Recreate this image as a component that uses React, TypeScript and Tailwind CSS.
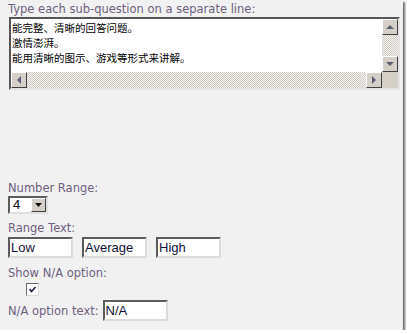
const label = "text-[11.5px] leading-[14px] text-[#6e5f7e]";
const inputBox =
  "h-[21px] w-[65px] bg-white border-2 border-t-[#5c5c5c] border-l-[#5c5c5c] border-b-[#dcdcdc] border-r-[#dcdcdc] px-[1px] text-[13px] leading-[17px] text-[#10103a] [font-family:'Liberation_Sans',Arial,sans-serif]";
const track =
  "bg-[repeating-conic-gradient(#cfcbc3_0_25%,#f5f5f3_0_50%)] bg-[length:2px_2px]";
const btn =
  "w-[16px] h-[16px] bg-[#d4d0c8] border border-t-white border-l-white border-b-[#404040] border-r-[#404040] flex items-center justify-center";

function Tri({ dir }: { dir: "up" | "down" | "left" | "right" }) {
  const pts = {
    up: "0,5 4,1 8,5",
    down: "0,1 4,5 8,1",
    left: "5,0 1,4 5,8",
    right: "1,0 5,4 1,8",
  }[dir];
  const flat = dir === "up" || dir === "down";
  return (
    <svg width={flat ? 8 : 6} height={flat ? 6 : 8} viewBox={flat ? "0 0 8 6" : "0 0 6 8"}>
      <polygon points={pts} fill="#5a6070" />
    </svg>
  );
}

export default function App() {
  return (
    <div className="w-[403px] h-[330px] bg-[#f1f1f1] shadow-[2px_2px_2px_rgba(0,0,0,0.6)] pl-2 pt-[2px] [font-family:'DejaVu_Sans',Verdana,sans-serif]">
      <div className={label}>Type each sub-question on a separate line:</div>

      {/* textarea */}
      <div className="ml-px mt-px w-[391px] h-[73px] border-2 border-t-[#555] border-l-[#555] border-b-[#e4e4e4] border-r-[#e4e4e4] flex flex-col">
        <div className="flex h-[53px]">
          <div className="flex-1 bg-white px-[1px] pt-[1px] text-[10.5px] leading-[15px] text-black [font-family:'Noto_Sans_CJK_SC',sans-serif]">
            <div>能完整、清晰的回答问题。</div>
            <div>激情澎湃。</div>
            <div>能用清晰的图示、游戏等形式来讲解。</div>
          </div>
          <div className={`w-[16px] flex flex-col ${track}`}>
            <div className={btn}>
              <Tri dir="up" />
            </div>
            <div className="flex-1" />
            <div className={btn}>
              <Tri dir="down" />
            </div>
          </div>
        </div>
        <div className="flex h-[16px]">
          <div className={`flex-1 flex justify-between ${track}`}>
            <div className={btn}>
              <Tri dir="left" />
            </div>
            <div className={btn}>
              <Tri dir="right" />
            </div>
          </div>
          <div className="w-[16px] bg-[#d4d0c8]" />
        </div>
      </div>

      <div className={`${label} mt-[91px]`}>Number Range:</div>
      <div className="mt-px w-[40px] h-[18px] bg-white border-2 border-t-[#5c5c5c] border-l-[#5c5c5c] border-b-[#e0e0e0] border-r-[#e0e0e0] flex items-center">
        <span className="flex-1 pl-[3px] text-[13px] leading-[14px] text-black [font-family:'Liberation_Sans',Arial,sans-serif]">
          4
        </span>
        <div className="w-[15px] h-[14px] bg-[#d4d0c8] border border-t-white border-l-white border-b-[#404040] border-r-[#404040] flex items-center justify-center">
          <svg width="7" height="4" viewBox="0 0 7 4">
            <polygon points="0,0 7,0 3.5,4" fill="#111" />
          </svg>
        </div>
      </div>

      <div className={`${label} mt-[7px]`}>Range Text:</div>
      <div className="mt-[2px] flex gap-[9px]">
        <div className={inputBox}>Low</div>
        <div className={inputBox}>Average</div>
        <div className={inputBox}>High</div>
      </div>

      <div className={`${label} mt-[8px]`}>Show N/A option:</div>
      <div className="mt-[3px] ml-[18px] w-[13px] h-[13px] bg-white border border-t-[#6a6a6a] border-l-[#6a6a6a] border-b-[#d8d8d8] border-r-[#d8d8d8] flex items-center justify-center">
        <svg width="9" height="9" viewBox="0 0 9 9">
          <polyline points="1.5,4 3.5,6.5 7.5,2" fill="none" stroke="#1a1a3a" strokeWidth="1.6" />
        </svg>
      </div>

      <div className="mt-[4px] flex items-center gap-[4px]">
        <span className={label}>N/A option text:</span>
        <div className={inputBox}>N/A</div>
      </div>
    </div>
  );
}
